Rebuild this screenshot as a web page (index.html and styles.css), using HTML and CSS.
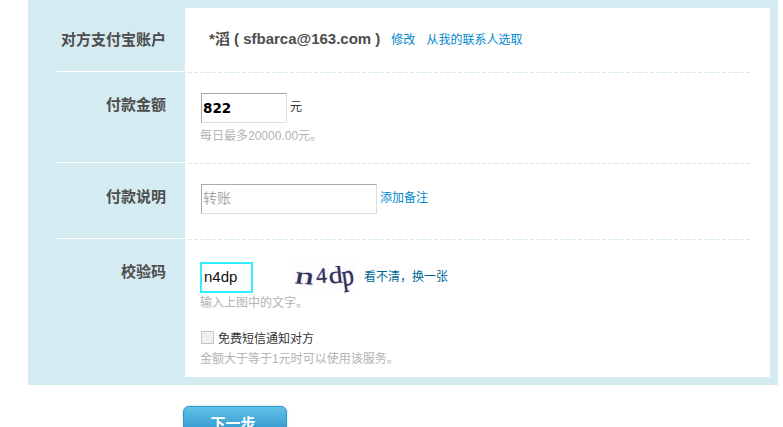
FILE: index.html
```html
<!DOCTYPE html>
<html lang="en">
<head>
    <meta charset="UTF-8">
    <meta name="viewport" content="width=device-width, initial-scale=1.0">
    <title>付款</title>
    <link rel="stylesheet" href="styles.css">
</head>
<body>
    <div class="panel">
        <div class="row row-account">
            <div class="label">对方支付宝账户</div>
            <div class="field account-field">
                <span class="account">*滔 ( sfbarca@163.com )</span>
                <a class="link">修改</a>
                <a class="link">从我的联系人选取</a>
            </div>
        </div>
        <div class="row row-amount">
            <div class="label">付款金额</div>
            <div class="field">
                <div class="line">
                    <input class="text-input amount-input" type="text" value="822">
                    <span class="unit">元</span>
                </div>
                <p class="hint">每日最多20000.00元。</p>
            </div>
        </div>
        <div class="row row-note">
            <div class="label">付款说明</div>
            <div class="field">
                <div class="line">
                    <input class="text-input note-input" type="text" placeholder="转账">
                    <a class="link add-link">添加备注</a>
                </div>
            </div>
        </div>
        <div class="row row-code">
            <div class="label">校验码</div>
            <div class="field last">
                <div class="line">
                    <input class="text-input code-input" type="text" value="n4dp">
                    <div class="captcha">
                        <span class="ch-n">n</span><span class="ch-4">4</span><span class="ch-d">d</span><span class="ch-p">p</span>
                    </div>
                    <a class="link dark-link">看不清，换一张</a>
                </div>
                <p class="hint code-hint">输入上图中的文字。</p>
                <label class="sms">
                    <span class="checkbox"></span>免费短信通知对方
                </label>
                <p class="hint sms-hint">金额大于等于1元时可以使用该服务。</p>
            </div>
        </div>
    </div>
    <button class="next-button">下一步</button>
</body>
</html>
```

FILE: styles.css
```css
html, body {
    height: 427px;
    overflow: hidden;
}
body {
    margin: 0;
    background-color: #ffffff;
    font-family: "Liberation Sans", "Noto Sans CJK SC", sans-serif;
    font-size: 12px;
    color: #333;
}
.panel {
    width: 742px;
    margin-left: 28px;
    padding: 8px 8px 8px 0;
    background-color: #d5ebf2;
}
.row {
    display: flex;
}
.row-account { height: 65px; }
.row-amount { height: 91px; }
.row-note { height: 76px; }
.row-code { height: 137px; }
.label {
    box-sizing: border-box;
    flex: none;
    align-self: flex-start;
    width: 129px;
    margin-left: 28px;
    padding-right: 19px;
    border-bottom: 1px solid #ffffff;
    font-size: 15px;
    font-weight: bold;
    color: #4d4d4d;
    text-align: right;
}
.row-account .label { height: 64px; padding-top: 20px; }
.row-amount .label { height: 90px; padding-top: 20px; }
.row-note .label { height: 75px; padding-top: 21px; }
.row-code .label { height: 136px; padding-top: 20px; border-bottom: none; }
.field {
    flex: 1;
    box-sizing: border-box;
    padding-left: 16px;
    background-color: #ffffff;
    background-image: linear-gradient(to right, transparent 33%, #d5ebf2 33%);
    background-size: 6px 1px;
    background-repeat: repeat-x;
    background-position: 100% 100%;
    box-shadow: 20px 0 0 #ffffff;
    margin-right: 20px;
}
.field.last {
    background-image: none;
}
.account-field {
    display: flex;
    align-items: center;
    padding: 0 0 6px 24px;
}
.account {
    font-size: 15px;
    font-weight: bold;
    color: #4d4d4d;
}
.link {
    color: #0088cc;
    font-size: 12px;
    margin-left: 11px;
}
.account-field .link {
    padding-top: 2px;
}
.line {
    display: flex;
    align-items: center;
}
.row-amount .line { padding-top: 20px; }
.row-note .line { padding-top: 20px; }
.row-code .line { padding-top: 21px; margin-left: -1px; }
.text-input {
    box-sizing: border-box;
    height: 30px;
    margin: 0;
    padding: 0 1px;
    border: 1px solid;
    border-color: #aaaaaa #dddddd #dddddd #aaaaaa;
    outline: none;
    background-color: #ffffff;
    font-family: "Liberation Sans", "Noto Sans CJK SC", sans-serif;
}
.amount-input {
    width: 86px;
    padding-bottom: 1px;
    font-family: "DejaVu Sans", sans-serif;
    font-size: 13.5px;
    font-weight: bold;
    color: #000;
}
.note-input {
    width: 176px;
    padding-bottom: 2px;
    font-size: 14px;
}
.note-input::placeholder {
    color: #a8a8a8;
    opacity: 1;
}
.code-input {
    width: 53px;
    height: 31px;
    padding: 0 2px 3px;
    border: 2px solid #33eeff;
    font-size: 15px;
    color: #111;
}
.unit {
    margin-left: 3px;
    font-size: 12px;
    color: #333;
    padding-bottom: 6px;
}
.add-link {
    margin-left: 3px;
    padding-bottom: 5px;
}
.captcha {
    display: flex;
    align-items: center;
    flex: none;
    box-sizing: border-box;
    width: 65px;
    height: 30px;
    margin-left: 37px;
    margin-bottom: 3px;
    padding-left: 5px;
    background-color: #fdfdfe;
    font-family: "Liberation Serif", serif;
    font-size: 24px;
    color: #33305f;
    text-shadow: 0 0 1px #6a6890;
}
.captcha span {
    display: flex;
    justify-content: center;
    line-height: 26px;
}
.ch-n { width: 20px; transform: scaleX(1.6) rotate(6deg); }
.ch-4 { width: 13px; font-size: 22px; transform: rotate(-4deg); }
.ch-d { width: 15px; transform: translateY(-1px) scaleX(1.15) rotate(-5deg); }
.ch-p { width: 9px; transform: translateY(-1px) scaleY(1.25) rotate(-10deg); }
.dark-link {
    margin-left: 9px;
    padding-bottom: 5px;
    color: #006699;
}
.hint {
    margin: 0 0 0 -1px;
    color: #b3b3b3;
    font-size: 12px;
}
.row-amount .hint { margin-top: 3px; }
.code-hint { margin-top: -1px; }
.sms {
    display: flex;
    align-items: center;
    margin-top: 19px;
    font-size: 12px;
    color: #333;
}
.checkbox {
    box-sizing: border-box;
    width: 13px;
    height: 13px;
    margin-right: 4px;
    border: 1px solid #c4c4c4;
    background-color: #f0f0f0;
}
.sms-hint { margin-top: 3px; }
.next-button {
    display: block;
    box-sizing: border-box;
    width: 104px;
    height: 34px;
    margin: 21px 0 0 183px;
    padding: 0 4px 2px 0;
    border: 1px solid #2a9dd0;
    border-radius: 6px;
    background-image: linear-gradient(#62c2e6, #2288c8);
    box-shadow: 0 0 2px #bbbbbb;
    color: #ffffff;
    font-family: "Noto Sans CJK SC", sans-serif;
    font-size: 15px;
    font-weight: bold;
}
```
